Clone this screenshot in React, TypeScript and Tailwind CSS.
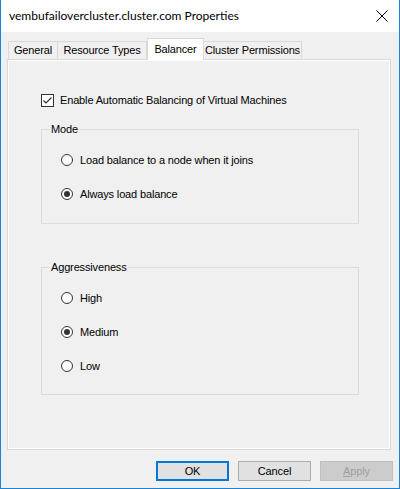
const body = { fontFamily: '"Liberation Sans", Arial, sans-serif', letterSpacing: '-0.15px' };
const title = { fontFamily: 'Lato, "Noto Sans", sans-serif', letterSpacing: '0' };

function Radio({ label, checked }: { label: string; checked?: boolean }) {
  return (
    <div className="flex items-center h-[14px] gap-[7px]">
      <span className="w-[12px] h-[12px] rounded-full border border-[#333333] bg-white flex items-center justify-center">
        {checked && <span className="w-[6px] h-[6px] rounded-full bg-[#333333]" />}
      </span>
      <span className="text-[11px] leading-[14px] text-black">{label}</span>
    </div>
  );
}

function GroupBox({ label, h, children }: { label: string; h: string; children: React.ReactNode }) {
  return (
    <div className={`border border-[#dcdcdc] ${h}`}>
      <span className="block w-fit -mt-[8px] ml-[8px] px-[1px] bg-[#f0f0f0] text-[11px] leading-[14px] text-black">
        {label}
      </span>
      <div className="pl-[19px]">{children}</div>
    </div>
  );
}

function Tab({ label, w, active }: { label: string; w: string; active?: boolean }) {
  if (active) {
    return (
      <div
        className={`${w} h-[22px] -mb-[1px] relative z-10 bg-white border border-b-0 border-[#d9d9d9] flex items-center justify-center whitespace-nowrap text-[11px] text-black`}
      >
        {label}
      </div>
    );
  }
  return (
    <div
      className={`${w} h-[18px] bg-[#f0f0f0] border border-b-0 border-[#d9d9d9] flex items-center justify-center whitespace-nowrap text-[11px] text-black -ml-[1px] first:ml-0`}
    >
      {label}
    </div>
  );
}

export default function App() {
  return (
    <div className="w-[400px] h-[489px] bg-[#f0f0f0] border-x border-b border-[#1883d7] flex flex-col" style={body}>
      <div className="h-[32px] bg-white flex items-center justify-between pl-[8px] pr-[11px]">
        <span className="text-[12px] text-black" style={title}>
          vembufailovercluster.cluster.com Properties
        </span>
        <svg width="12" height="12" viewBox="0 0 12 12">
          <path d="M0.5 0.5 L11.5 11.5 M11.5 0.5 L0.5 11.5" stroke="#000" strokeWidth="1" />
        </svg>
      </div>

      <div className="mt-[6px] ml-[6px] mr-[8px]">
        <div className="flex items-end h-[21px] pl-[1px]">
          <Tab label="General" w="w-[50px]" />
          <Tab label="Resource Types" w="w-[90px]" />
          <Tab label="Balancer" w="w-[57px]" active />
          <Tab label="Cluster Permissions" w="w-[99px]" />
        </div>
        <div className="h-[391px] border border-[#d9d9d9]">
          <div className="h-full border border-white pt-[32px] pl-[32px] pr-[30px]">
            <div className="flex items-center h-[14px] gap-[6px]">
              <span className="w-[13px] h-[13px] border border-[#333333] bg-white flex items-center justify-center">
                <svg width="11" height="11" viewBox="0 0 11 11">
                  <path d="M1.5 5.5 L4 8 L9.5 2.5" stroke="#333" strokeWidth="1.2" fill="none" />
                </svg>
              </span>
              <span className="text-[11px] leading-[14px] text-black">
                Enable Automatic Balancing of Virtual Machines
              </span>
            </div>

            <div className="mt-[22px]">
              <GroupBox label="Mode" h="h-[95px]">
                <div className="mt-[17px] flex flex-col gap-[20px]">
                  <Radio label="Load balance to a node when it joins" />
                  <Radio label="Always load balance" checked />
                </div>
              </GroupBox>
            </div>

            <div className="mt-[43px]">
              <GroupBox label="Aggressiveness" h="h-[128px]">
                <div className="mt-[17px] flex flex-col gap-[20px]">
                  <Radio label="High" />
                  <Radio label="Medium" checked />
                  <Radio label="Low" />
                </div>
              </GroupBox>
            </div>
          </div>
        </div>
      </div>

      <div className="mt-[11px] flex justify-end gap-[9px] pr-[6px]">
        <button className="w-[73px] h-[20px] bg-[#e1e1e1] border-2 border-[#0078d7] text-[11px] text-black">
          OK
        </button>
        <button className="w-[73px] h-[20px] bg-[#e1e1e1] border border-[#adadad] text-[11px] text-black">
          Cancel
        </button>
        <button className="w-[73px] h-[20px] bg-[#cccccc] border border-[#bfbfbf] text-[11px] text-[#a0a0a0]">
          <span className="underline">A</span>pply
        </button>
      </div>
    </div>
  );
}
